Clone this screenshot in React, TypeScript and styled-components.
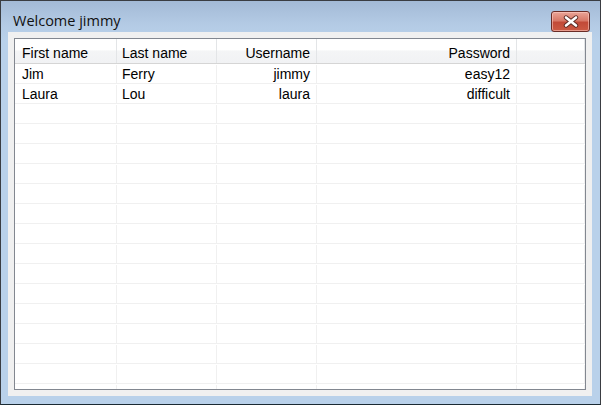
import React from 'react';
import styled, { createGlobalStyle } from 'styled-components';

const GlobalStyle = createGlobalStyle`
  html, body {
    margin: 0;
    padding: 0;
    background: #ffffff;
  }
  * {
    box-sizing: border-box;
  }
`;

type Col = { key: 'first' | 'last' | 'user' | 'pass'; label: string; align: 'left' | 'right' };

const columns: Col[] = [
  { key: 'first', label: 'First name', align: 'left' },
  { key: 'last', label: 'Last name', align: 'left' },
  { key: 'user', label: 'Username', align: 'right' },
  { key: 'pass', label: 'Password', align: 'right' },
];

const users = [
  { first: 'Jim', last: 'Ferry', user: 'jimmy', pass: 'easy12' },
  { first: 'Laura', last: 'Lou', user: 'laura', pass: 'difficult' },
];

const TOTAL_ROWS = 17;

const CloseIcon = () => (
  <svg width="16" height="13" viewBox="0 0 16 13">
    <path d="M3 2.5 L13 10.5 M13 2.5 L3 10.5" stroke="#5a2a24" strokeWidth="4.4" strokeLinecap="round" />
    <path d="M3 2.5 L13 10.5 M13 2.5 L3 10.5" stroke="#ffffff" strokeWidth="2.6" strokeLinecap="round" />
  </svg>
);

export default () => {
  const rows = Array.from({ length: TOTAL_ROWS }, (_, i) => users[i]);

  return (
    <>
      <GlobalStyle />
      <Window>
        <TitleBar>
          <Title>Welcome jimmy</Title>
          <CloseButton aria-label="Close">
            <CloseIcon />
          </CloseButton>
        </TitleBar>
        <Client>
          <Table>
            <HeaderRow>
              {columns.map((c, i) => (
                <HeaderCell key={c.key} align={c.align} first={i === 0}>
                  {c.label}
                </HeaderCell>
              ))}
              <HeaderCell align="left" />
            </HeaderRow>
            <Body>
              {rows.map((u, r) => (
                <Row key={r}>
                  {columns.map((c, i) => (
                    <Cell key={c.key} align={c.align} first={i === 0}>
                      {u ? u[c.key] : ''}
                    </Cell>
                  ))}
                  <Cell align="left" />
                </Row>
              ))}
            </Body>
          </Table>
        </Client>
      </Window>
    </>
  );
};

const gridCols = '102px 100px 100px 200px 1fr';

const Window = styled.div`
  width: 601px;
  height: 405px;
  display: flex;
  flex-direction: column;
  border: 1px solid #3a3d42;
  border-bottom-color: #1a2a33;
  background: linear-gradient(to bottom, #a3bad6 0px, #b4cbe5 24px, #b9d1ea 40px, #b9d1ea 100%);
  overflow: hidden;
`;

const TitleBar = styled.div`
  height: 31px;
  flex: none;
  display: flex;
  align-items: center;
  justify-content: space-between;
  padding: 0 10px 0 12px;
`;

const Title = styled.div`
  font-family: 'Open Sans', 'Noto Sans', sans-serif;
  font-size: 14.5px;
  color: #111111;
  margin-top: 8px;
`;

const CloseButton = styled.button`
  width: 39px;
  height: 21px;
  padding: 0;
  margin-top: 9px;
  display: flex;
  align-items: center;
  justify-content: center;
  border: 1px solid #6a2c26;
  border-radius: 3px;
  background: linear-gradient(to bottom, #eaa598 0%, #d87968 45%, #c24a38 55%, #cc5a44 100%);
  box-shadow: inset 0 0 0 1px rgba(255, 210, 200, 0.55);
`;

const Client = styled.div`
  flex: 1;
  min-height: 0;
  display: flex;
  margin: 0 8px 8px 7px;
  padding: 6px;
  background: #f0f0f0;
`;

const Table = styled.div`
  flex: 1;
  min-height: 0;
  display: flex;
  flex-direction: column;
  border: 1px solid #828790;
  background: #ffffff;
  overflow: hidden;
  font-family: 'Liberation Sans', Arial, sans-serif;
  font-size: 14px;
  color: #000000;
`;

const HeaderRow = styled.div`
  display: grid;
  grid-template-columns: ${gridCols};
  height: 25px;
  flex: none;
  background: linear-gradient(to bottom, #ffffff 0%, #ffffff 45%, #f4f5f6 50%, #f1f2f4 100%);
  border-bottom: 1px solid #d5d5d5;
`;

const HeaderCell = styled.div<{ align: 'left' | 'right'; first?: boolean }>`
  display: flex;
  align-items: center;
  justify-content: ${({ align }) => (align === 'right' ? 'flex-end' : 'flex-start')};
  padding: 3px 6px 0 ${({ first }) => (first ? '7px' : '5px')};
  border-right: 1px solid #e3e5e7;
  white-space: nowrap;
`;

const Body = styled.div`
  flex: 1;
  min-height: 0;
  overflow: hidden;
`;

const Row = styled.div`
  display: grid;
  grid-template-columns: ${gridCols};
  height: 20px;
  padding-top: 1px;
  border-bottom: 1px solid #f0f0f0;
`;

const Cell = styled.div<{ align: 'left' | 'right'; first?: boolean }>`
  display: flex;
  align-items: center;
  justify-content: ${({ align }) => (align === 'right' ? 'flex-end' : 'flex-start')};
  padding: 0 6px 0 ${({ first }) => (first ? '7px' : '5px')};
  border-right: 1px solid #f0f0f0;
  white-space: nowrap;
`;
